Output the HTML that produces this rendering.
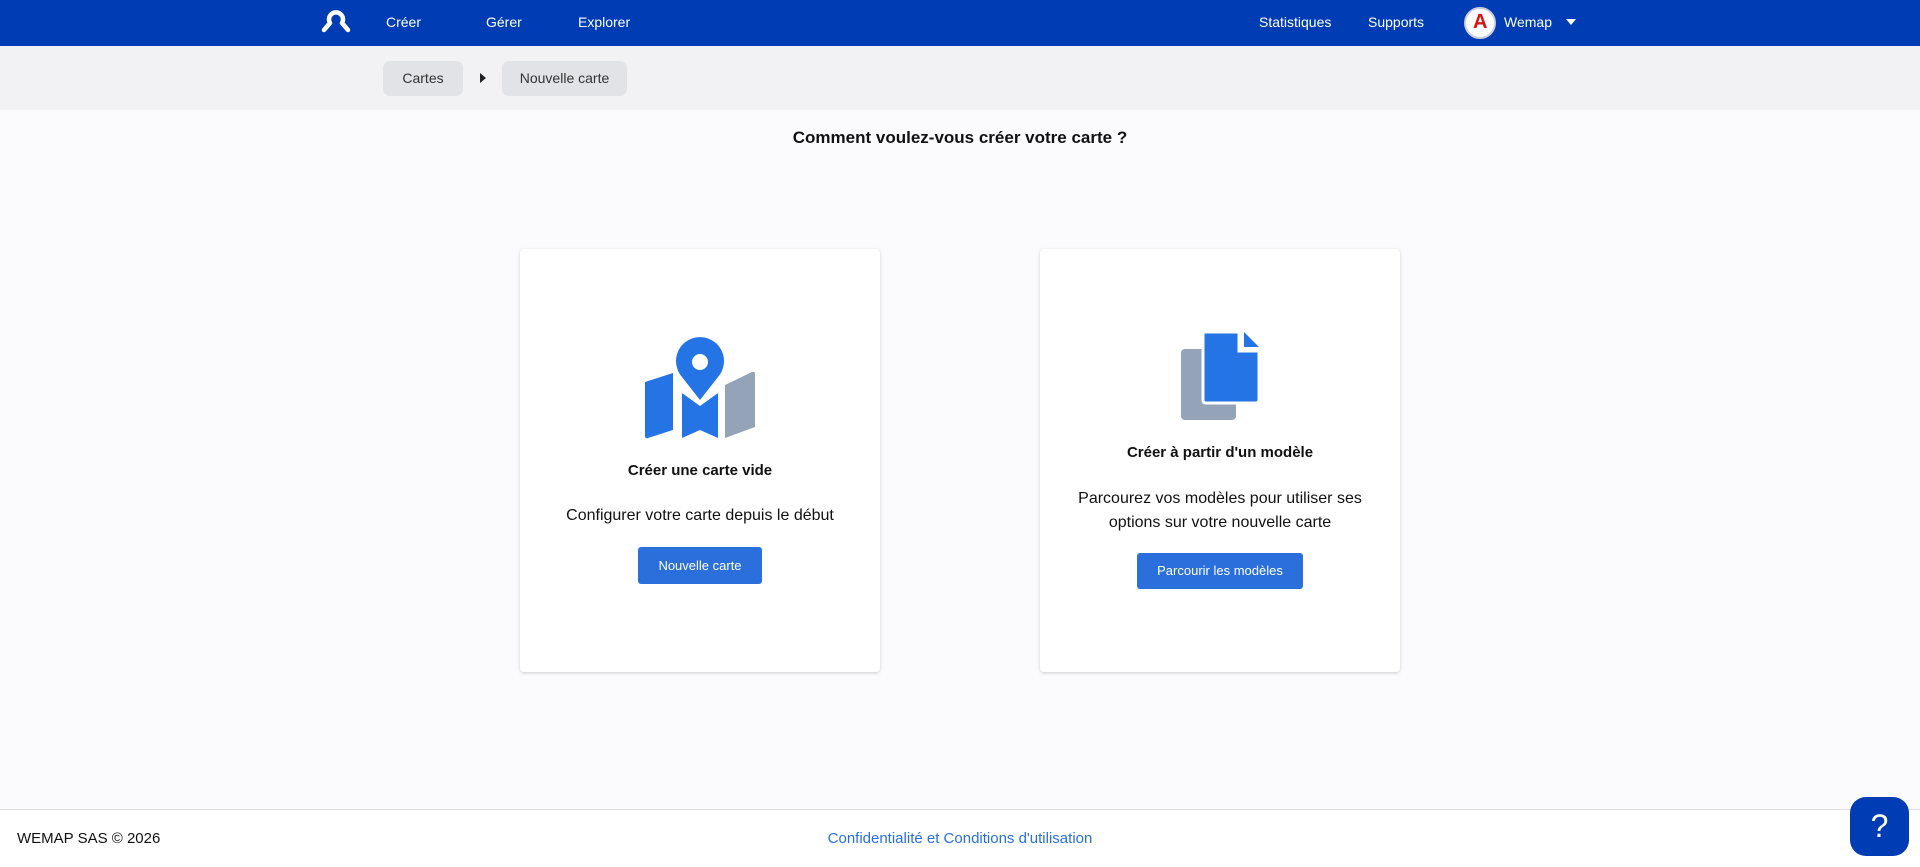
<!DOCTYPE html>
<html><head><meta charset="utf-8"><style>
*{box-sizing:border-box;margin:0;padding:0}
body{width:1920px;height:867px;background:#fbfbfd;font-family:"Liberation Sans",sans-serif;position:relative;overflow:hidden;color:#111}
.hdr{position:absolute;left:0;top:0;width:1920px;height:46px;background:#003cb3}
.hdr span{position:absolute;top:14px;color:#fff;font-size:14px}
.bc{position:absolute;left:0;top:46px;width:1920px;height:64px;background:#f2f2f4}
.pill{position:absolute;top:15px;height:35px;background:#e2e3e7;border-radius:7px;font-size:14px;color:#333;line-height:35px;text-align:center}
.abs{position:absolute}
.card{position:absolute;top:249px;width:360px;height:423px;background:#fff;border-radius:4px;box-shadow:0 1px 3px rgba(0,0,0,.18)}
.t{position:absolute;width:100%;text-align:center}
.btn{position:absolute;background:#2a6fdb;color:#fff;font-size:13px;border-radius:3px;text-align:center}
</style></head><body>
<div class="hdr">
<svg class="abs" style="left:320px;top:10px" width="32" height="24" viewBox="0 0 32 24"><path d="M4 20 L10 13 A7 7 0 1 1 22 13 L28 20" fill="none" stroke="#fff" stroke-width="4.5" stroke-linecap="round" stroke-linejoin="round"/><circle cx="16" cy="9" r="3" fill="#003cb3"/></svg>
<span style="left:386px">Créer</span>
<span style="left:486px">Gérer</span>
<span style="left:578px">Explorer</span>
<span style="left:1259px">Statistiques</span>
<span style="left:1368px">Supports</span>
<div class="abs" style="left:1464px;top:7px;width:32px;height:32px;border-radius:50%;background:#fff;border:2px solid #ccd"><span style="position:absolute;left:7px;top:2px;color:#d11;font-weight:bold;font-size:20px">A</span></div>
<span style="left:1504px">Wemap</span>
<div class="abs" style="left:1566px;top:19px;border-left:5px solid transparent;border-right:5px solid transparent;border-top:6px solid #fff"></div>
</div>
<div class="bc">
<div class="pill" style="left:383px;width:80px">Cartes</div>
<div class="abs" style="left:480px;top:27px;border-top:5px solid transparent;border-bottom:5px solid transparent;border-left:6px solid #222"></div>
<div class="pill" style="left:502px;width:125px">Nouvelle carte</div>
</div>
<div class="t" style="top:128px;font-size:17px;font-weight:bold">Comment voulez-vous créer votre carte ?</div>

<div class="card" style="left:520px">
<svg class="abs" style="left:100px;top:71px" width="160" height="130" viewBox="0 0 160 130">
<path d="M25 62 L53 53 L53 110 L28 118 Q25 119 25 116 Z" fill="#2474e5"/>
<path d="M62 73 L80 86 L98 73 L98 118 L80 110 L62 118 Z" fill="#2474e5"/>
<path d="M105 65 L132 52 Q135 51 135 54 L135 107 L105 118 Z" fill="#94a3b8"/>
<path d="M80 80 L62 57 A24 24 0 1 1 98 57 Z" fill="#2474e5"/>
<circle cx="80" cy="42" r="8" fill="#fff"/>
</svg>
<div class="t" style="top:213px;font-size:15px;font-weight:bold">Créer une carte vide</div>
<div class="t" style="top:258px;font-size:16px">Configurer votre carte depuis le début</div>
<div class="btn" style="left:118px;top:298px;width:124px;height:37px;line-height:37px">Nouvelle carte</div>
</div>

<div class="card" style="left:1040px">
<svg class="abs" style="left:120px;top:71px" width="120" height="110" viewBox="0 0 120 110">
<rect x="21" y="29" width="55" height="71" rx="4" fill="#94a3b8"/>
<path d="M43 12 H79 V31 H99 V80 Q99 83 96 83 H46 Q43 83 43 80 Z" fill="#2474e5" stroke="#fff" stroke-width="3"/>
<path d="M84 12 L99 27 H84 Z" fill="#2474e5"/>
</svg>
<div class="t" style="top:195px;font-size:15px;font-weight:bold">Créer à partir d'un modèle</div>
<div class="t" style="top:238px;font-size:16px;line-height:24px">Parcourez vos modèles pour utiliser ses<br>options sur votre nouvelle carte</div>
<div class="btn" style="left:97px;top:304px;width:166px;height:36px;line-height:36px">Parcourir les modèles</div>
</div>

<div class="abs" style="left:0;top:809px;width:1920px;height:58px;background:#fff;border-top:1px solid #ddd"></div>
<div class="abs" style="left:17px;top:830px;font-size:15px">WEMAP SAS © 2026</div>
<div class="t" style="top:830px;font-size:15px;color:#2a6fdb">Confidentialité et Conditions d'utilisation</div>
<div class="abs" style="left:1850px;top:797px;width:59px;height:59px;border-radius:16px;background:#003cb3;color:#fff;font-size:32px;text-align:center;line-height:59px">?</div>
</body></html>
